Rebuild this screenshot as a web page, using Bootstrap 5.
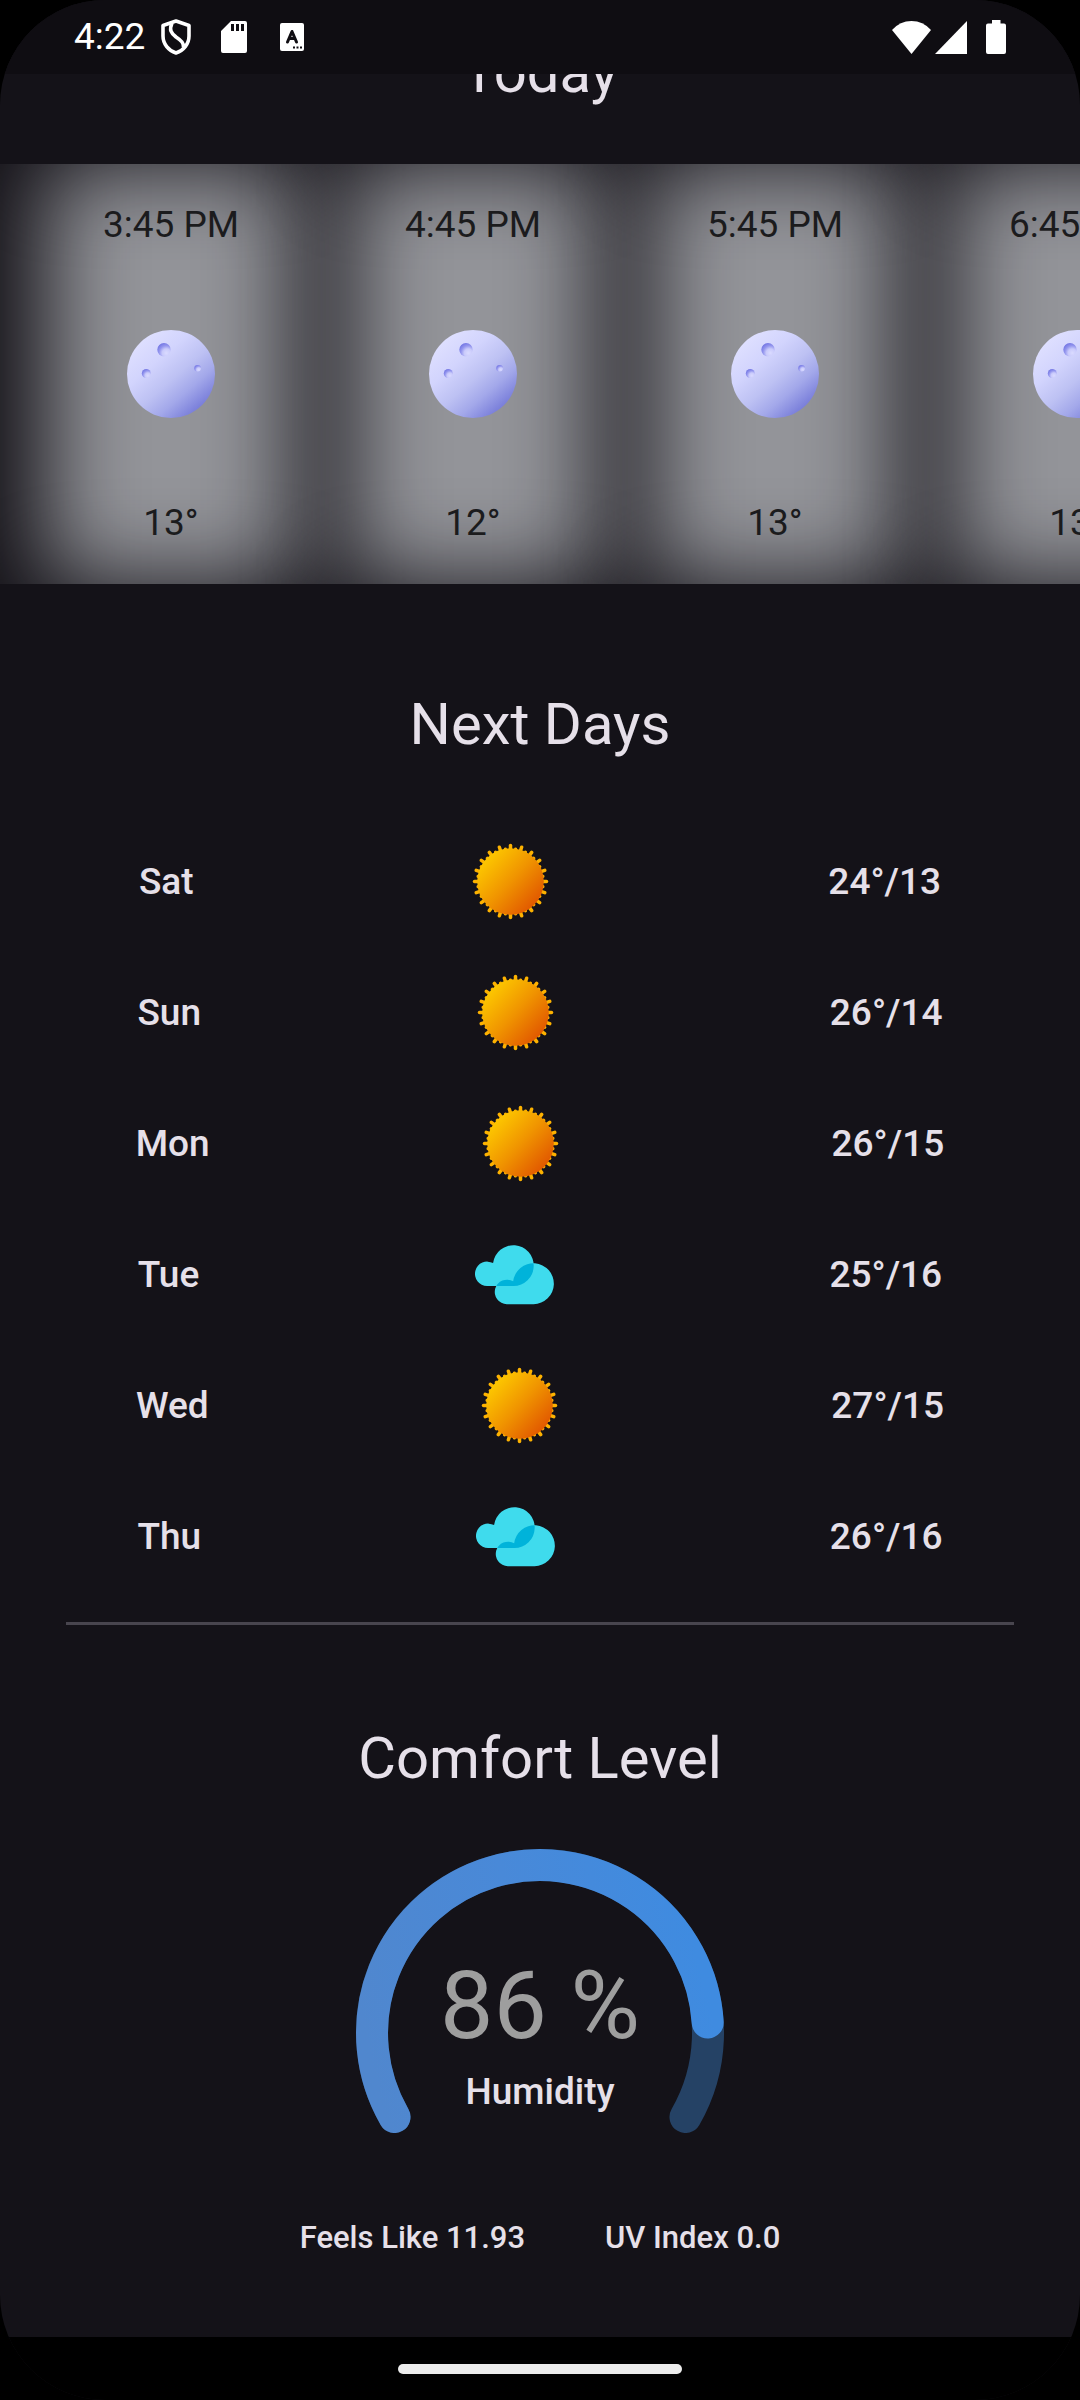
<!DOCTYPE html>
<html lang="en">
<head>
<meta charset="utf-8">
<meta name="viewport" content="width=device-width, initial-scale=1">
<title>Weather</title>
<link href="https://cdn.jsdelivr.net/npm/bootstrap@5.3.0/dist/css/bootstrap.min.css" rel="stylesheet">
<style>
  html, body { background: #000; }
  body { font-family: Roboto, "Noto Sans", sans-serif; color: #e6e0e9; }
  .device { min-height: 100vh; background: #141218; border-radius: 105px; }
  .status-bar { height: 74px; background: #0f0d12; color: #fff; z-index: 2; padding: 0 74px; font-size: 37px; line-height: 74px; }
  .status-bar svg { display: block; fill: #fff; }
  .icon-gap { margin-left: 30px; }
  .battery-gap { margin-left: 19px; }
  /* the list is scrolled so that its first heading is partly under the status bar */
  .scrolled { margin-top: -39px; }
  .section-title { font-size: 58px; line-height: 74px; font-weight: 400; margin: 0; }
  .hours { margin-top: 55px; height: 420px; padding-left: 20px; color: #1b1b1d; font-size: 37px; line-height: 54px; }
  .hour { flex: 0 0 302px; padding: 34px 0; isolation: isolate; }
  .hour::before { content: ""; position: absolute; inset: 0 26px; background: #939499; filter: blur(46px); z-index: -1; }
  .next-title { margin-top: 103px; }
  .days { margin-top: 55px; font-size: 37px; font-weight: 500; }
  .days li { height: 131px; }
  .divider { height: 3px; margin: 20px 66px 0; background: #48454e; opacity: 1; border: 0; }
  .comfort-title { margin-top: 96px; }
  .gauge { margin-top: 54px; display: grid; justify-items: center; }
  .gauge > * { grid-area: 1 / 1; }
  .gauge-text { padding-top: 101px; }
  .gauge-value { font-size: 95px; line-height: 112px; color: #9e9e9e; }
  .gauge-label { font-size: 37px; line-height: 52px; font-weight: 500; margin-top: 4px; }
  .extras { margin-top: 84px; gap: 80px; font-size: 31px; line-height: 42px; font-weight: 500; }
  .gesture-bar { height: 63px; background: #000; }
  .gesture-pill { width: 284px; height: 10px; background: #ececec; border: 0; padding: 0; }
</style>
</head>
<body>
<svg width="0" height="0" class="position-absolute" aria-hidden="true">
  <defs>
    <linearGradient id="moonFill" x1="0.15" y1="0.1" x2="0.85" y2="0.9">
      <stop offset="0" stop-color="#dfe0ff"/><stop offset=".3" stop-color="#d2d4fd"/><stop offset=".55" stop-color="#bdc1f3"/><stop offset=".75" stop-color="#a3a8ea"/><stop offset="1" stop-color="#7479d8"/>
    </linearGradient>
    <radialGradient id="craterFill" cx=".68" cy=".74" r=".78">
      <stop offset="0" stop-color="#dadbff"/><stop offset=".4" stop-color="#c9cafb"/><stop offset=".7" stop-color="#9496ee"/><stop offset="1" stop-color="#7477e4"/>
    </radialGradient>
    <linearGradient id="sunFill" x1="0.12" y1="0.15" x2="0.88" y2="0.85">
      <stop offset="0" stop-color="#fdc800"/><stop offset=".5" stop-color="#f09400"/><stop offset="1" stop-color="#e15700"/>
    </linearGradient>
    <linearGradient id="arcFill" gradientUnits="userSpaceOnUse" x1="20" y1="230" x2="352" y2="150">
      <stop offset="0" stop-color="#5087ce"/><stop offset=".5" stop-color="#4989d8"/><stop offset="1" stop-color="#3f8be0"/>
    </linearGradient>
    <path id="backCloud" d="M81 194.500A36.500 36.500 0 1 1 99 126A61 61 0 1 1 160 194.500Z"/>
    <path id="frontCloud" d="M140 248.500A36.500 36.500 0 1 1 159 180.500A61 61 0 1 1 220 248.500Z"/>
    <clipPath id="inBack"><use href="#backCloud"/></clipPath>
    <g id="rays"><path d="M0-36V36" stroke-width="3.500"/><path d="M0-32.800V32.800" stroke-width="3.200" transform="rotate(9)"/></g>
  </defs>
  <symbol id="moon" viewBox="0 0 88 88">
    <circle cx="44" cy="44" r="44" fill="url(#moonFill)"/>
    <circle cx="37" cy="19.800" r="6.700" fill="url(#craterFill)"/>
    <circle cx="19.300" cy="43.500" r="4.500" fill="url(#craterFill)"/>
    <circle cx="70.600" cy="38.200" r="3.300" fill="url(#craterFill)"/>
  </symbol>
  <symbol id="sun" viewBox="-39.500 -39.500 79 79">
    <g stroke="#fdb200" stroke-linecap="round">
      <use href="#rays"/><use href="#rays" transform="rotate(18)"/><use href="#rays" transform="rotate(36)"/><use href="#rays" transform="rotate(54)"/><use href="#rays" transform="rotate(72)"/><use href="#rays" transform="rotate(90)"/><use href="#rays" transform="rotate(108)"/><use href="#rays" transform="rotate(126)"/><use href="#rays" transform="rotate(144)"/><use href="#rays" transform="rotate(162)"/>
    </g>
    <circle r="33.300" fill="url(#sunFill)"/>
  </symbol>
  <symbol id="clouds" viewBox="45 42 236 236">
    <use href="#backCloud" fill="#3fdbed"/>
    <use href="#frontCloud" fill="#3fdbed"/>
    <g clip-path="url(#inBack)"><use href="#frontCloud" fill="#00b3da"/></g>
  </symbol>
</svg>

<div class="device d-flex flex-column overflow-hidden">
  <header class="status-bar d-flex align-items-center position-relative">
    <span>4:22</span>
    <svg class="ms-3" width="30" height="36" viewBox="0 0 30 36" role="img" aria-label="Shield"><path d="M15 2L28 6.500V17C28 25 22.500 31.500 15 34C7.500 31.500 2 25 2 17V6.500Z" fill="none" stroke="#fff" stroke-width="3.600" stroke-linejoin="round"/><path d="M11 4C8 11 10 14 15 18C21 22 22.500 24 22.500 28" fill="none" stroke="#fff" stroke-width="3.600"/></svg>
    <svg class="icon-gap" width="26" height="32" viewBox="0 0 26 32" role="img" aria-label="SD card"><path fill-rule="evenodd" d="M10 0H24Q26 0 26 2V30Q26 32 24 32H2Q0 32 0 30V10ZM10 3V10H13V3ZM15 3V10H18V3ZM20 3V10H23V3Z"/></svg>
    <svg class="icon-gap" width="28" height="28" viewBox="-3 0 28 28" role="img" aria-label="Keyboard"><rect width="24" height="28" rx="2"/><path d="M7.500 19L12 8.500L16.500 19M9 15.500H15" fill="none" stroke="#0f0d12" stroke-width="3" stroke-linecap="round" stroke-linejoin="round"/><path d="M13 23.500h2v2h-2zM16.500 23.500h2v2h-2zM20 23.500h2v2h-2z" fill="#0f0d12"/></svg>
    <svg class="ms-auto" width="39" height="33" viewBox="0 0 39 33" role="img" aria-label="Wi-Fi"><path d="M0 9Q8 0 19.500 0T39 9L19.500 33Z"/></svg>
    <svg class="ms-1" width="32" height="33" viewBox="0 0 32 33" role="img" aria-label="Signal"><path d="M32 0V33H0Z"/></svg>
    <svg class="battery-gap" width="20" height="34" viewBox="0 0 20 34" role="img" aria-label="Battery"><path d="M6 0H14.500V3.500H18Q20 3.500 20 5.500V32Q20 34 18 34H2Q0 34 0 32V5.500Q0 3.500 2 3.500H6Z"/></svg>
  </header>

  <main class="scrolled flex-grow-1">
    <h2 class="section-title text-center">Today</h2>
    <section class="hours d-flex overflow-hidden position-relative text-center">
      <div class="hour position-relative d-flex flex-column align-items-center justify-content-between"><span>3:45 PM</span><svg width="88" height="88"><use href="#moon"/></svg><span>13°</span></div>
      <div class="hour position-relative d-flex flex-column align-items-center justify-content-between"><span>4:45 PM</span><svg width="88" height="88"><use href="#moon"/></svg><span>12°</span></div>
      <div class="hour position-relative d-flex flex-column align-items-center justify-content-between"><span>5:45 PM</span><svg width="88" height="88"><use href="#moon"/></svg><span>13°</span></div>
      <div class="hour position-relative d-flex flex-column align-items-center justify-content-between"><span>6:45 PM</span><svg width="88" height="88"><use href="#moon"/></svg><span>13°</span></div>
    </section>

    <h2 class="section-title next-title text-center">Next Days</h2>
    <ul class="days list-unstyled mb-0">
      <li class="d-flex justify-content-around align-items-center"><span>Sat</span><svg width="79" height="79"><use href="#sun"/></svg><span>24°/13</span></li>
      <li class="d-flex justify-content-around align-items-center"><span>Sun</span><svg width="79" height="79"><use href="#sun"/></svg><span>26°/14</span></li>
      <li class="d-flex justify-content-around align-items-center"><span>Mon</span><svg width="79" height="79"><use href="#sun"/></svg><span>26°/15</span></li>
      <li class="d-flex justify-content-around align-items-center"><span>Tue</span><svg width="79" height="79"><use href="#clouds"/></svg><span>25°/16</span></li>
      <li class="d-flex justify-content-around align-items-center"><span>Wed</span><svg width="79" height="79"><use href="#sun"/></svg><span>27°/15</span></li>
      <li class="d-flex justify-content-around align-items-center"><span>Thu</span><svg width="79" height="79"><use href="#clouds"/></svg><span>26°/16</span></li>
    </ul>
    <hr class="divider">

    <h2 class="section-title comfort-title text-center">Comfort Level</h2>
    <section class="gauge">
      <!-- 240 degree arc, radius 168, centred on 184,184 -->
      <svg width="368" height="284" viewBox="0 0 368 284" fill="none" stroke-width="32" stroke-linecap="round" aria-hidden="true">
        <path d="M38.500 268A168 168 0 1 1 329.500 268" stroke="#254265"/>
        <path d="M38.500 268A168 168 0 1 1 351.700 173.500" stroke="url(#arcFill)"/>
      </svg>
      <div class="gauge-text text-center">
        <div class="gauge-value">86 %</div>
        <div class="gauge-label">Humidity</div>
      </div>
    </section>
    <div class="extras d-flex justify-content-center"><span>Feels Like 11.93</span><span>UV Index 0.0</span></div>
  </main>

  <footer class="gesture-bar d-flex align-items-center justify-content-center"><button type="button" class="gesture-pill rounded-pill" aria-label="Home"></button></footer>
</div>
<script src="https://cdn.jsdelivr.net/npm/bootstrap@5.3.0/dist/js/bootstrap.bundle.min.js"></script>
</body>
</html>
